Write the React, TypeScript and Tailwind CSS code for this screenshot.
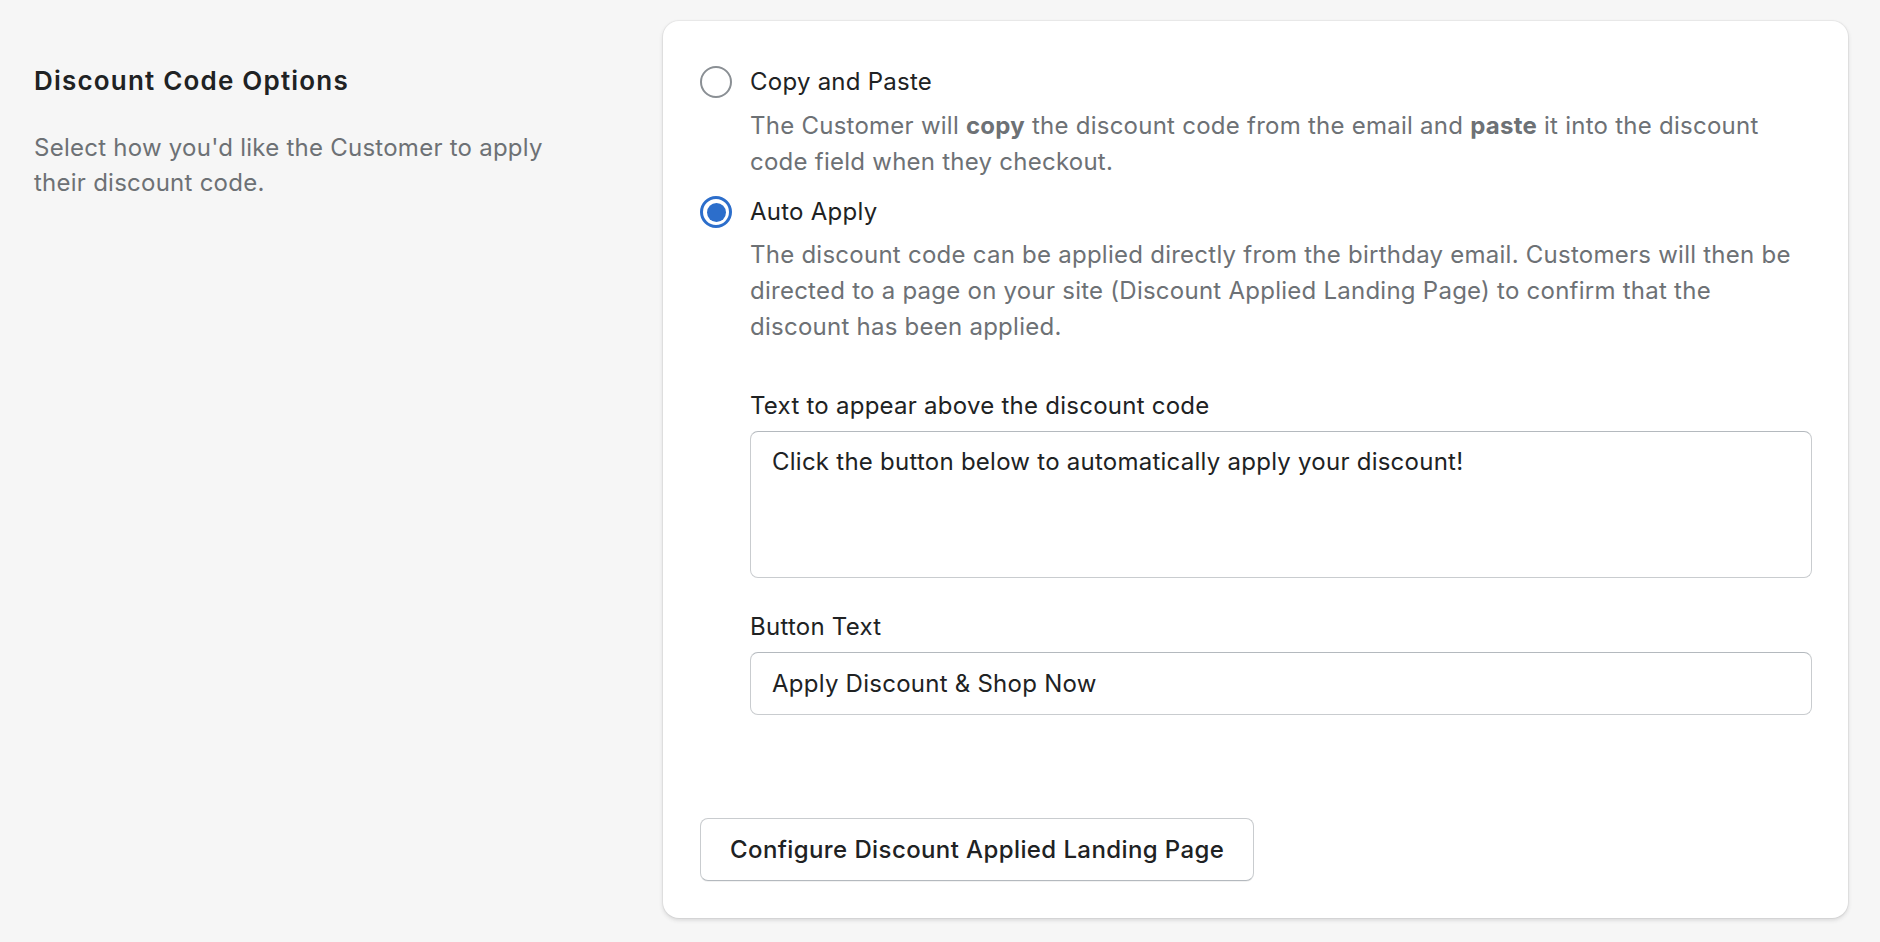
import React from "react";

function Radio({ checked }: { checked: boolean }) {
  if (checked) {
    return (
      <span className="flex h-[32px] w-[32px] shrink-0 items-center justify-center rounded-full border-[3px] border-[#2c6ecb] bg-white">
        <span className="h-[19px] w-[19px] rounded-full bg-[#2c6ecb]" />
      </span>
    );
  }
  return <span className="block h-[32px] w-[32px] shrink-0 rounded-full border-[2.5px] border-[#8a8f94] bg-white" />;
}

export default function App() {
  return (
    <div className="flex min-h-[942px] bg-[#f6f6f6] pb-[25px] pl-[34px] pr-[32px] pt-[21px] font-['Inter','Liberation_Sans',sans-serif] text-[24px] leading-[36px] tracking-[0.25px] text-[#202223] antialiased">
      <div className="w-[629px] shrink-0 pr-[89px] pt-[41px]">
        <h2 className="text-[26px] font-semibold leading-[38px] tracking-[1.2px] text-[#202223]">Discount Code Options</h2>
        <p className="mt-[30px] text-[24px] leading-[35px] text-[#6d7175]">
          Select how you'd like the Customer to apply their discount code.
        </p>
      </div>

      <div className="flex-1 self-start rounded-[16px] bg-white pb-[37px] pl-[37px] pr-[36px] pt-[43px] shadow-[0_0_0_1px_rgba(63,63,68,0.05),0_2px_4px_0_rgba(63,63,68,0.18)]">
        <div className="flex items-center gap-[18px]">
          <Radio checked={false} />
          <span>Copy and Paste</span>
        </div>
        <p className="mt-[8px] pl-[50px] text-[#6d7175]">
          The Customer will <span className="font-bold">copy</span> the discount code from the email and{" "}
          <span className="font-bold">paste</span> it into the discount code field when they checkout.
        </p>

        <div className="mt-[14px] flex items-center gap-[18px]">
          <Radio checked={true} />
          <span>Auto Apply</span>
        </div>
        <p className="mt-[7px] pl-[50px] text-[#6d7175]">
          The discount code can be applied directly from the birthday email. Customers will then be directed to a page
          on your site (Discount Applied Landing Page) to confirm that the discount has been applied.
        </p>

        <div className="mt-[43px] pl-[50px]">
          <div>Text to appear above the discount code</div>
          <div className="mt-[7px] h-[147px] rounded-[8px] border border-[#c9cccf] border-t-[#b4b9be] bg-white pl-[21px] pr-[21px] pt-[12px]">
            Click the button below to automatically apply your discount!
          </div>

          <div className="mt-[31px]">Button Text</div>
          <div className="mt-[7px] flex h-[63px] items-center rounded-[8px] border border-[#c9cccf] border-t-[#b4b9be] bg-white px-[21px]">
            Apply Discount &amp; Shop Now
          </div>
        </div>

        <div className="mt-[103px] flex">
          <button className="h-[63px] rounded-[8px] border border-[#c9cccf] border-b-[#b4b9be] bg-white px-[29px] text-[24px] font-medium leading-[36px] tracking-[0.4px] text-[#202223] shadow-[0_1px_0_rgba(0,0,0,0.05)]">
            Configure Discount Applied Landing Page
          </button>
        </div>
      </div>
    </div>
  );
}
